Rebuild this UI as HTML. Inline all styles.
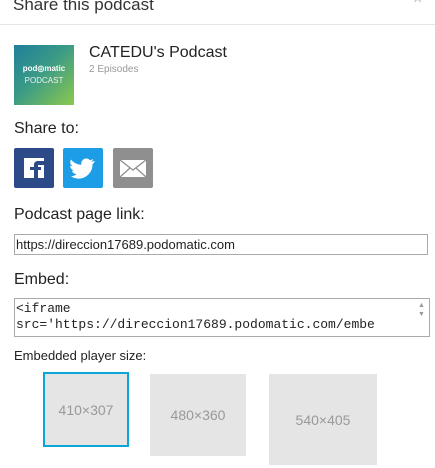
<!DOCTYPE html>
<html><head><style>
body{margin:0;width:435px;height:468px;overflow:hidden;background:#fff;font-family:"Liberation Sans",sans-serif;color:#222;position:relative}
.a{position:absolute}
.box{position:absolute;background:#e5e5e5;color:#999;font-size:14px;display:flex;align-items:center;justify-content:center}
</style></head><body>
<div class="a" style="left:13px;top:-5px;font-size:17px;color:#333">Share this podcast</div>
<div class="a" style="left:413px;top:-9px;font-size:16px;color:#bbb">×</div>
<div class="a" style="left:0;top:24px;width:435px;height:1px;background:#e5e5e5"></div>
<div class="a" style="left:14px;top:45px;width:60px;height:60px;background:linear-gradient(135deg,#1f7f9a 0%,#3a9a86 45%,#8cc94e 100%)">
<div style="position:absolute;top:19px;width:100%;text-align:center;color:#fff;font-size:8px;font-weight:bold">pod◎matic</div>
<div style="position:absolute;top:31px;width:100%;text-align:center;color:#f0f0f0;font-size:8px">PODCAST</div></div>
<div class="a" style="left:89px;top:44px;font-size:16px;color:#222">CATEDU's Podcast</div>
<div class="a" style="left:89px;top:64px;font-size:10px;color:#999">2 Episodes</div>
<div class="a" style="left:14px;top:120px;font-size:16px">Share to:</div>
<div class="a" style="left:14px;top:148px;width:40px;height:40px;background:#2c4a87;border-radius:2px">
<div style="position:absolute;left:10px;top:10px;width:20px;height:20px;background:#fff"></div>
<div style="position:absolute;left:20px;top:13px;width:7px;height:20px;border-left:4px solid #2c4a87;border-top:4px solid #2c4a87;border-radius:4px 0 0 0"></div>
<div style="position:absolute;left:16px;top:19px;width:11px;height:3px;background:#2c4a87"></div></div>
<div class="a" style="left:63px;top:148px;width:40px;height:40px;background:#1c9de6;border-radius:2px">
<svg width="40" height="40" viewBox="0 0 40 40"><path d="M31 13c-1 .5-2 .7-3 .8 1-.6 2-1.600 2.200-2.800-1 .6-2 1-3.200 1.200a5 5 0 0 0-8.600 4.600c-4.200-.2-7.900-2.200-10.400-5.300-1.500 2.500-.6 5.300 1.500 6.700-.8 0-1.600-.2-2.300-.6 0 2.400 1.700 4.400 4 4.900-.8.2-1.500.2-2.300.1.6 2 2.500 3.400 4.700 3.500A10 10 0 0 1 8 28.400 14 14 0 0 0 29.500 16.500V16c1-.7 1.700-1.600 2.300-2.500z" fill="#fff"/></svg></div>
<div class="a" style="left:113px;top:148px;width:40px;height:40px;background:#8f8f8f;border-radius:2px">
<svg width="40" height="40" viewBox="0 0 40 40"><rect x="7" y="12" width="26" height="17" fill="#fff"/><path d="M7 12l13 10 13-10M7 29l10-9M33 29l-10-9" stroke="#8f8f8f" stroke-width="1.3" fill="none"/></svg></div>
<div class="a" style="left:14px;top:206px;font-size:16px">Podcast page link:</div>
<div class="a" style="left:14px;top:234px;height:19px;border:1px solid #aaa;font-size:13px;line-height:19px;padding-left:1px;width:411px">https://direccion17689.podomatic.com</div>
<div class="a" style="left:14px;top:271px;font-size:16px">Embed:</div>
<div class="a" style="left:14px;top:298px;width:416px;height:39px;border:1px solid #aaa;font-family:'Liberation Mono',monospace;font-size:13px;line-height:16px;padding:2px 0 0 1px;box-sizing:border-box;overflow:hidden;white-space:pre">&lt;iframe
src='https://direccion17689.podomatic.com/embe</div>
<div class="a" style="left:418px;top:301px;font-size:7px;color:#999;line-height:9px">▲<br>▼</div>
<div class="a" style="left:14px;top:348px;font-size:13px">Embedded player size:</div>
<div class="box" style="left:43px;top:372px;width:82px;height:71px;border:2px solid #0aa6d8">410×307</div>
<div class="box" style="left:150px;top:374px;width:96px;height:82px">480×360</div>
<div class="box" style="left:269px;top:374px;width:108px;height:91px">540×405</div>
</body></html>
